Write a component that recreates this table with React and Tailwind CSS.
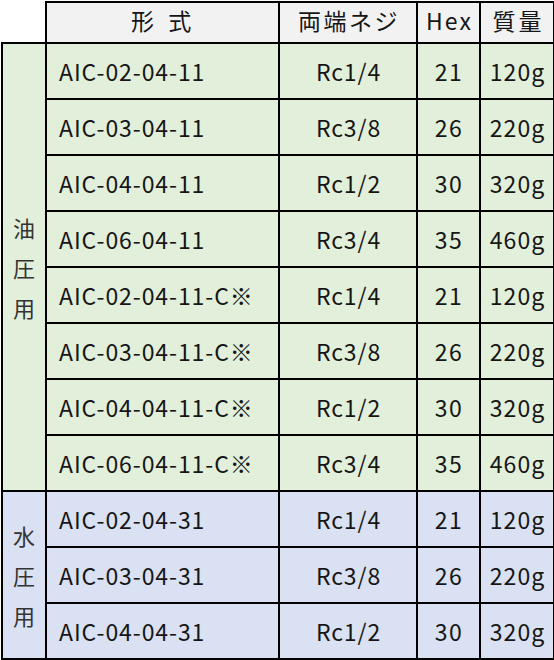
import React from 'react';

const groups = [
  {
    label: ['油', '圧', '用'],
    bg: 'bg-[#e2efda]',
    rows: [
      ['AIC-02-04-11', 'Rc1/4', '21', '120g'],
      ['AIC-03-04-11', 'Rc3/8', '26', '220g'],
      ['AIC-04-04-11', 'Rc1/2', '30', '320g'],
      ['AIC-06-04-11', 'Rc3/4', '35', '460g'],
      ['AIC-02-04-11-C※', 'Rc1/4', '21', '120g'],
      ['AIC-03-04-11-C※', 'Rc3/8', '26', '220g'],
      ['AIC-04-04-11-C※', 'Rc1/2', '30', '320g'],
      ['AIC-06-04-11-C※', 'Rc3/4', '35', '460g'],
    ],
  },
  {
    label: ['水', '圧', '用'],
    bg: 'bg-[#d9e1f2]',
    rows: [
      ['AIC-02-04-31', 'Rc1/4', '21', '120g'],
      ['AIC-03-04-31', 'Rc3/8', '26', '220g'],
      ['AIC-04-04-31', 'Rc1/2', '30', '320g'],
    ],
  },
];

const cell = 'border-2 border-black h-[56px] p-0';
const head = 'border-2 border-black font-normal p-0 pb-[4px]';

export default function App() {
  return (
    <div className="bg-white w-[554px] h-[660px] text-[#161616] font-['Noto_Sans_CJK_JP','Noto_Sans',sans-serif] text-[23px] leading-none">
      <table className="border-collapse table-fixed mt-[1px] ml-[1px] w-[553px]">
        <colgroup>
          <col className="w-[44px]" />
          <col className="w-[233px]" />
          <col className="w-[138px]" />
          <col className="w-[63px]" />
          <col className="w-[74px]" />
        </colgroup>
        <thead>
          <tr className="h-[41px] bg-[#f2f2f2]">
            <th className="bg-white p-0 border-r-2 border-black"></th>
            <th className={`${head} tracking-[0.2em] pl-[2px]`}>形 式</th>
            <th className={`${head} tracking-[0.11em] pl-[2px]`}>両端ネジ</th>
            <th className={`${head} tracking-[0.09em] pl-[2px]`}>Hex</th>
            <th className={`${head} tracking-[0.13em] pl-[3px]`}>質量</th>
          </tr>
        </thead>
        <tbody>
          {groups.map((g) =>
            g.rows.map((r, i) => (
              <tr key={r[0]} className={g.bg}>
                {i === 0 && (
                  <td rowSpan={g.rows.length} className="border-2 border-black p-0 align-middle text-[#333] text-[22px]">
                    <div className="flex flex-col items-center gap-[18px]">
                      {g.label.map((c, k) => (
                        <span key={k}>{c}</span>
                      ))}
                    </div>
                  </td>
                )}
                <td className={`${cell} pl-[12px] tracking-[0.04em]`}>{r[0]}</td>
                <td className={`${cell} text-center tracking-[0.04em] pl-[1px]`}>{r[1]}</td>
                <td className={`${cell} text-center tracking-[0.06em] pl-[1px]`}>{r[2]}</td>
                <td className={`${cell} text-center tracking-[0.045em] pl-[1px]`}>{r[3]}</td>
              </tr>
            ))
          )}
        </tbody>
      </table>
    </div>
  );
}
